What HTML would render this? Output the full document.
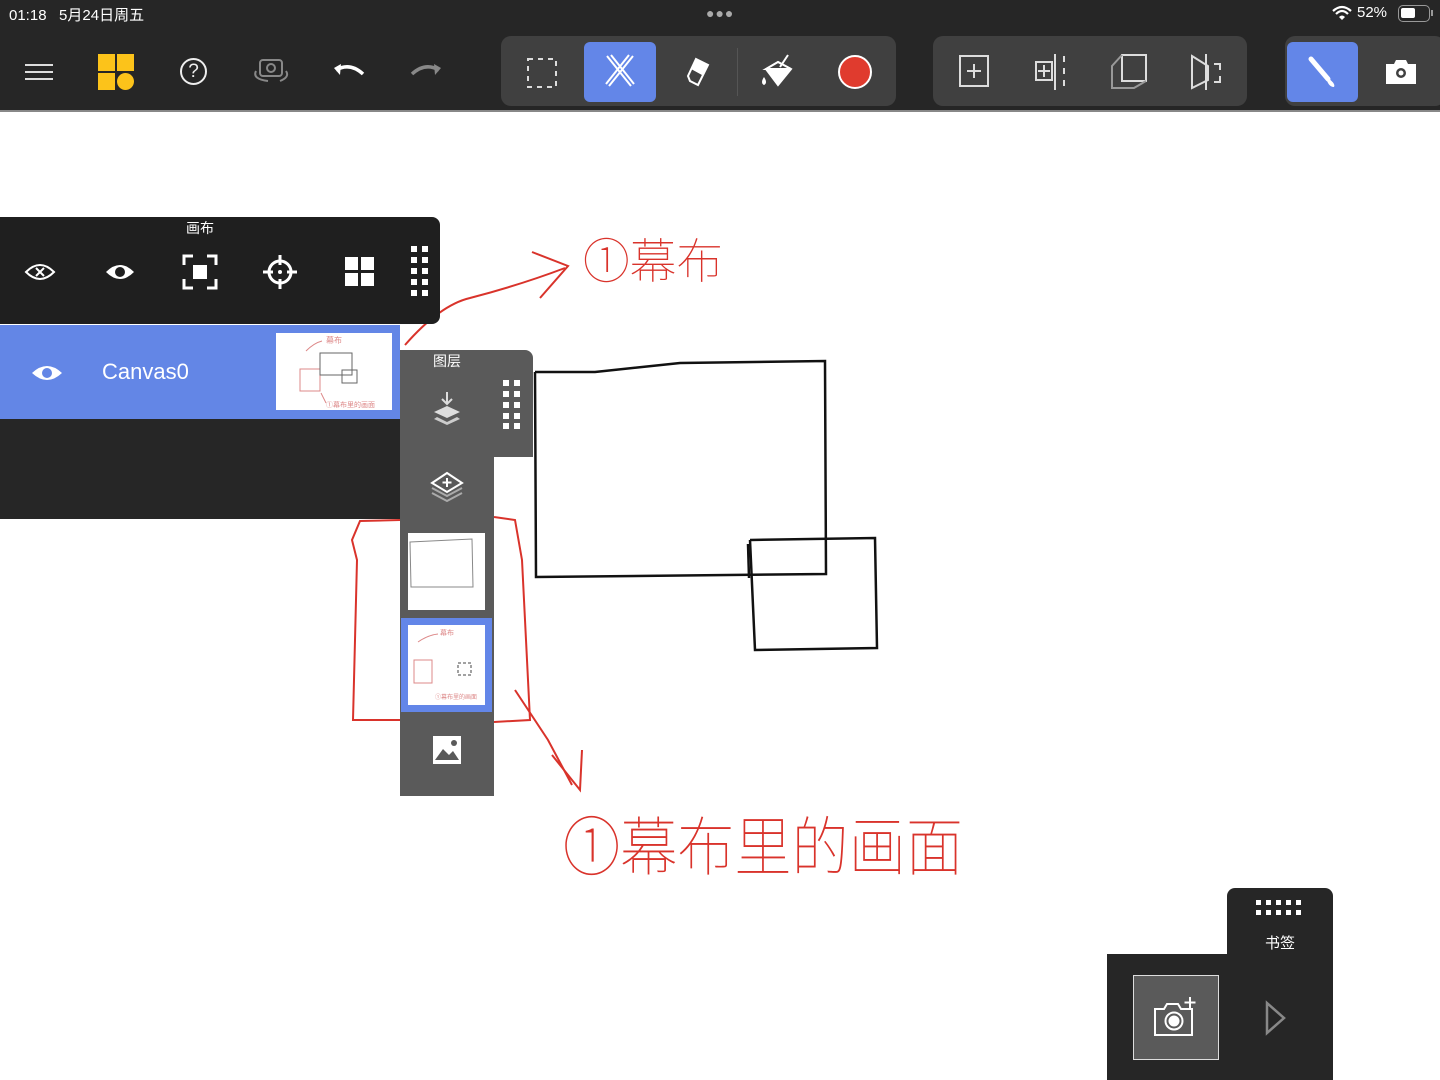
<!DOCTYPE html>
<html><head><meta charset="utf-8"><style>
*{margin:0;padding:0;box-sizing:border-box}
body{width:1440px;height:1080px;background:#fff;position:relative;overflow:hidden;font-family:"Liberation Sans","Noto Sans CJK SC",sans-serif}
.a{position:absolute}
</style></head><body>
<div class="a" style="left:0;top:0;width:1440px;height:110px;background:#262626"></div>
<div class="a" style="left:0;top:110px;width:1440px;height:2px;background:#888"></div>
<div class="a" style="left:9px;top:4px;color:#fff;font-size:15px">01:18&nbsp;&nbsp;&nbsp;5月24日周五</div>
<div class="a" style="left:706px;top:5px;color:#aaa;font-size:14px;letter-spacing:1px">●●●</div>
<svg class="a" style="left:1332px;top:5px" width="20" height="16" viewBox="0 0 20 16"><path d="M1 6 Q10 -2 19 6" stroke="#fff" stroke-width="2.2" fill="none"/><path d="M4 9 Q10 3 16 9" stroke="#fff" stroke-width="2.2" fill="none"/><path d="M7 12 Q10 9 13 12 L10 15Z" fill="#fff"/></svg>
<div class="a" style="left:1357px;top:4px;color:#fff;font-size:15px">52%</div>
<div class="a" style="left:1398px;top:5px;width:32px;height:17px;border:1.5px solid #999;border-radius:5px"><div style="margin:2px;width:14px;height:10px;background:#fff;border-radius:2px"></div></div>
<div class="a" style="left:1431px;top:10px;width:2px;height:6px;background:#999"></div>

<svg class="a" style="left:24px;top:62px" width="30" height="20"><path d="M1 3H29M1 10H29M1 17H29" stroke="#ddd" stroke-width="2"/></svg>
<div class="a" style="left:98px;top:54px;width:17px;height:17px;background:#fcc31a"></div>
<div class="a" style="left:117px;top:54px;width:17px;height:17px;background:#fcc31a"></div>
<div class="a" style="left:98px;top:73px;width:17px;height:17px;background:#fcc31a"></div>
<div class="a" style="left:117px;top:73px;width:17px;height:17px;background:#fcc31a;border-radius:50%"></div>
<div class="a" style="left:180px;top:58px;width:27px;height:27px;border:2px solid #eee;border-radius:50%;color:#eee;font-size:19px;text-align:center;line-height:23px">?</div>
<svg class="a" style="left:250px;top:55px" width="42" height="32"><rect x="10" y="5" width="22" height="16" rx="3" stroke="#888" stroke-width="2" fill="none"/><circle cx="21" cy="13" r="4" stroke="#888" stroke-width="2" fill="none"/><path d="M6 16 Q2 24 18 26 M30 26 Q40 22 36 16" stroke="#888" stroke-width="2" fill="none"/></svg>
<svg class="a" style="left:332px;top:62px" width="34" height="18"><path d="M4 8 Q18 0 31 12" stroke="#fff" stroke-width="3.5" fill="none"/><path d="M2 6 L9 2 L8 13Z" fill="#fff"/></svg>
<svg class="a" style="left:409px;top:62px" width="34" height="18"><path d="M30 8 Q16 0 3 12" stroke="#888" stroke-width="3.5" fill="none"/><path d="M32 6 L25 2 L26 13Z" fill="#888"/></svg>

<div class="a" style="left:501px;top:36px;width:395px;height:70px;background:#404040;border-radius:10px"></div>
<div class="a" style="left:584px;top:42px;width:72px;height:60px;background:#6386e8;border-radius:6px"></div>
<svg class="a" style="left:526px;top:57px" width="32" height="32"><rect x="2" y="2" width="28" height="28" stroke="#ddd" stroke-width="2" stroke-dasharray="5 5" fill="none"/></svg>
<svg class="a" style="left:603px;top:54px" width="34" height="36"><path d="M4 2 L28 32 M8 1 L31 30 M30 2 L6 32 M26 1 L3 30" stroke="#fff" stroke-width="2" fill="none"/></svg>
<svg class="a" style="left:684px;top:56px" width="28" height="32"><path d="M12 3 L24 9 L14 29 L6 25 L4 20Z" stroke="#fff" stroke-width="2" fill="none"/><path d="M12 3 L24 9 L18 19 L7 13Z" fill="#fff"/></svg>
<div class="a" style="left:737px;top:48px;width:1px;height:48px;background:#555"></div>
<svg class="a" style="left:758px;top:53px" width="40" height="38"><path d="M8 16 L20 32 L33 16 L20 9Z" stroke="#fff" stroke-width="2" fill="#fff"/><path d="M8 16 L33 16 L20 9Z" fill="#404040" stroke="#fff" stroke-width="2"/><path d="M22 14 L30 2" stroke="#fff" stroke-width="2"/><path d="M6 24 Q2 30 6 32 Q10 30 6 24Z" fill="#fff"/></svg>
<div class="a" style="left:838px;top:55px;width:34px;height:34px;border-radius:50%;background:#e03b2e;border:2px solid #fff"></div>

<div class="a" style="left:933px;top:36px;width:314px;height:70px;background:#404040;border-radius:10px"></div>
<svg class="a" style="left:956px;top:54px" width="36" height="36"><rect x="4" y="2" width="28" height="30" stroke="#ddd" stroke-width="2" fill="none"/><path d="M18 10V24M11 17H25" stroke="#ddd" stroke-width="2"/></svg>
<svg class="a" style="left:1032px;top:52px" width="40" height="40"><rect x="4" y="10" width="16" height="18" stroke="#ddd" stroke-width="2" fill="none"/><path d="M12 13V25M6 19H18M23 2V38" stroke="#ddd" stroke-width="2"/><path d="M32 4V10M32 16V22M32 28V34" stroke="#ddd" stroke-width="2"/></svg>
<svg class="a" style="left:1108px;top:52px" width="42" height="40"><rect x="14" y="3" width="24" height="26" stroke="#ddd" stroke-width="2" fill="none"/><path d="M14 3 L4 14 L4 36 L26 36 L38 29" stroke="#999" stroke-width="2" fill="none"/></svg>
<svg class="a" style="left:1186px;top:52px" width="40" height="40"><path d="M6 4 L22 14 L22 28 L6 36Z" stroke="#ddd" stroke-width="2" fill="none"/><path d="M20 2V38" stroke="#ddd" stroke-width="2"/><path d="M28 12H34V18M34 24V30H28" stroke="#ddd" stroke-width="2" fill="none"/></svg>

<div class="a" style="left:1285px;top:36px;width:160px;height:70px;background:#404040;border-radius:10px"></div>
<div class="a" style="left:1287px;top:42px;width:71px;height:60px;background:#6386e8;border-radius:6px"></div>
<svg class="a" style="left:1306px;top:55px" width="34" height="34"><path d="M5 4 L22 24" stroke="#fff" stroke-width="5" stroke-linecap="round"/><path d="M20 22 Q30 28 28 32 Q22 32 20 22Z" fill="#fff"/></svg>
<svg class="a" style="left:1384px;top:58px" width="34" height="28"><path d="M2 6 H10 L12 2 H22 L24 6 H32 V26 H2Z" fill="#fff"/><circle cx="17" cy="15" r="5" fill="#404040"/><circle cx="17" cy="15" r="2.5" fill="#fff"/></svg>

<svg class="a" style="left:0;top:0" width="1440" height="1080">
<g fill="none" stroke="#111" stroke-width="2.5">
<path d="M535 372 L536 577 L826 574 L825 361 L680 363 L595 372 L535 372"/>
<path d="M750 540 L755 650 L877 648 L875 538 L750 540"/>
<path d="M748 544 L749 578"/>
</g>
<g fill="none" stroke="#d9332b" stroke-width="2">
<path d="M405 345 Q440 305 470 298 Q520 285 565 268"/>
<path d="M532 252 L568 266 L540 298"/>
<path d="M400 520 L360 521 L352 540 L357 560 L353 720 L400 720"/>
<path d="M494 517 L515 520 L522 560 L530 720 L494 722"/>
<path d="M515 690 L548 740 L572 785"/>
<path d="M552 755 L580 790 L582 750"/>
</g>
<text x="583" y="278" fill="#d9332b" font-size="48" font-family="'Noto Sans CJK SC',sans-serif" font-weight="100" textLength="140" lengthAdjust="spacingAndGlyphs">①幕布</text>
<text x="563" y="870" fill="#d9332b" font-size="64" font-family="'Noto Sans CJK SC',sans-serif" font-weight="100" textLength="400" lengthAdjust="spacingAndGlyphs">①幕布里的画面</text>
</svg>

<div class="a" style="left:0;top:217px;width:440px;height:107px;background:#1f1f1f;border-radius:0 8px 8px 0"></div>
<div class="a" style="left:0;top:218px;width:400px;text-align:center;color:#fff;font-size:14px">画布</div>
<svg class="a" style="left:24px;top:260px" width="32" height="24"><path d="M2 12 Q16 -2 30 12 Q16 26 2 12Z" stroke="#fff" stroke-width="2" fill="none"/><path d="M12 8 L20 16 M20 8 L12 16" stroke="#fff" stroke-width="2"/></svg>
<svg class="a" style="left:104px;top:260px" width="32" height="24"><path d="M2 12 Q16 -2 30 12 Q16 26 2 12Z" fill="#fff"/><circle cx="16" cy="12" r="5" fill="#1f1f1f"/></svg>
<svg class="a" style="left:182px;top:254px" width="36" height="36"><path d="M2 11V2H11M25 2H34V11M34 25V34H25M11 34H2V25" stroke="#fff" stroke-width="3" fill="none"/><rect x="11" y="11" width="14" height="14" fill="#fff"/></svg>
<svg class="a" style="left:262px;top:254px" width="36" height="36"><circle cx="18" cy="18" r="11" stroke="#fff" stroke-width="3" fill="none"/><path d="M18 1V11M18 25V35M1 18H11M25 18H35" stroke="#fff" stroke-width="3"/><circle cx="18" cy="18" r="2" fill="#fff"/></svg>
<svg class="a" style="left:345px;top:257px" width="30" height="30"><rect x="0" y="0" width="13" height="13" fill="#fff"/><rect x="16" y="0" width="13" height="13" fill="#fff"/><rect x="0" y="16" width="13" height="13" fill="#fff"/><rect x="16" y="16" width="13" height="13" fill="#fff"/></svg>
<svg class="a" style="left:411px;top:246px" width="18" height="52"><g fill="#fff"><rect x="0" y="0" width="6" height="6"/><rect x="11" y="0" width="6" height="6"/><rect x="0" y="11" width="6" height="6"/><rect x="11" y="11" width="6" height="6"/><rect x="0" y="22" width="6" height="6"/><rect x="11" y="22" width="6" height="6"/><rect x="0" y="33" width="6" height="6"/><rect x="11" y="33" width="6" height="6"/><rect x="0" y="44" width="6" height="6"/><rect x="11" y="44" width="6" height="6"/></g></svg>
<div class="a" style="left:0;top:325px;width:400px;height:94px;background:#6386e6"></div>
<div class="a" style="left:0;top:419px;width:400px;height:100px;background:#262626"></div>
<svg class="a" style="left:31px;top:362px" width="32" height="22"><path d="M1 11 Q16 -3 31 11 Q16 25 1 11Z" fill="#fff"/><circle cx="16" cy="11" r="5" fill="#6386e6"/></svg>
<div class="a" style="left:102px;top:359px;color:#fff;font-size:22px">Canvas0</div>
<div class="a" style="left:276px;top:333px;width:116px;height:77px;background:#fff"></div>
<svg class="a" style="left:276px;top:333px" width="116" height="77"><g fill="none" stroke="#d88" stroke-width="1"><path d="M30 18 Q38 10 46 8"/><rect x="24" y="36" width="20" height="22"/><path d="M45 60 L50 70"/></g><text x="50" y="10" font-size="8" fill="#d88">幕布</text><text x="50" y="74" font-size="7" fill="#d88">①幕布里的画面</text><g fill="none" stroke="#666"><rect x="44" y="20" width="32" height="22"/><rect x="66" y="37" width="15" height="13"/></g></svg>

<div class="a" style="left:400px;top:350px;width:133px;height:107px;background:#5a5a5a;border-radius:0 8px 0 0"></div>
<div class="a" style="left:400px;top:457px;width:94px;height:339px;background:#5a5a5a"></div>
<div class="a" style="left:400px;top:351px;width:94px;text-align:center;color:#fff;font-size:14px">图层</div>
<svg class="a" style="left:432px;top:390px" width="30" height="38"><path d="M15 2V14M10 9L15 14L20 9" stroke="#ddd" stroke-width="2" fill="none"/><path d="M2 22L15 16L28 22L15 28Z" fill="#ddd"/><path d="M2 29L15 35L28 29L25 27L15 32L5 27Z" fill="#ccc"/></svg>
<svg class="a" style="left:503px;top:380px" width="20" height="50"><g fill="#fff"><rect x="0" y="0" width="6" height="6"/><rect x="11" y="0" width="6" height="6"/><rect x="0" y="11" width="6" height="6"/><rect x="11" y="11" width="6" height="6"/><rect x="0" y="22" width="6" height="6"/><rect x="11" y="22" width="6" height="6"/><rect x="0" y="33" width="6" height="6"/><rect x="11" y="33" width="6" height="6"/><rect x="0" y="43" width="6" height="6"/><rect x="11" y="43" width="6" height="6"/></g></svg>
<svg class="a" style="left:429px;top:470px" width="36" height="32"><path d="M3 18L18 26L33 18M3 23L18 31L33 23" stroke="#aaa" stroke-width="2" fill="none"/><path d="M3 13L18 3L33 13L18 22Z" stroke="#fff" stroke-width="2" fill="#5a5a5a"/><path d="M18 8V17M13.5 12.5H22.5" stroke="#fff" stroke-width="2"/></svg>
<div class="a" style="left:408px;top:533px;width:77px;height:77px;background:#fff"></div>
<svg class="a" style="left:408px;top:533px" width="77" height="77"><path d="M2 9 L64 6 L65 54 L3 54Z" stroke="#888" fill="none"/></svg>
<div class="a" style="left:401px;top:618px;width:91px;height:94px;background:#6386e8"></div>
<div class="a" style="left:408px;top:625px;width:77px;height:80px;background:#fff"></div>
<svg class="a" style="left:408px;top:625px" width="77" height="80"><g fill="none" stroke="#d88"><path d="M10 17 Q20 10 30 9"/><rect x="6" y="35" width="18" height="23"/></g><text x="32" y="10" font-size="7" fill="#d88">幕布</text><text x="27" y="74" font-size="6" fill="#d88">①幕布里的画面</text><rect x="50" y="38" width="13" height="12" stroke="#444" fill="none" stroke-dasharray="3 2"/></svg>
<svg class="a" style="left:432px;top:735px" width="30" height="30"><rect x="1" y="1" width="28" height="28" fill="#fff"/><path d="M3 25 L11 14 L17 20 L21 16 L27 25Z" fill="#5a5a5a"/><circle cx="22" cy="8" r="3" fill="#5a5a5a"/></svg>

<div class="a" style="left:1227px;top:888px;width:106px;height:192px;background:#262626;border-radius:8px 8px 0 0"></div>
<div class="a" style="left:1107px;top:954px;width:226px;height:126px;background:#262626"></div>
<svg class="a" style="left:1256px;top:900px" width="50" height="18"><g fill="#fff"><rect x="0" y="0" width="5" height="5"/><rect x="10" y="0" width="5" height="5"/><rect x="20" y="0" width="5" height="5"/><rect x="30" y="0" width="5" height="5"/><rect x="40" y="0" width="5" height="5"/><rect x="0" y="10" width="5" height="5"/><rect x="10" y="10" width="5" height="5"/><rect x="20" y="10" width="5" height="5"/><rect x="30" y="10" width="5" height="5"/><rect x="40" y="10" width="5" height="5"/></g></svg>
<div class="a" style="left:1227px;top:932px;width:106px;text-align:center;color:#fff;font-size:15px">书签</div>
<div class="a" style="left:1133px;top:975px;width:86px;height:85px;background:#5a5a5a;border:1.5px solid #ddd"></div>
<svg class="a" style="left:1152px;top:995px" width="48" height="44"><path d="M3 14 H12 L15 9 H26 L29 14 H40 V40 H3Z" stroke="#fff" stroke-width="2" fill="none"/><circle cx="22" cy="26" r="8.5" stroke="#fff" stroke-width="2" fill="none"/><circle cx="22" cy="26" r="5.5" fill="#fff"/><path d="M38 2V13M32.5 7.5H43.5" stroke="#fff" stroke-width="2"/></svg>
<svg class="a" style="left:1264px;top:1000px" width="24" height="36"><path d="M3 3 L20 18 L3 33Z" stroke="#888" stroke-width="2.5" fill="none"/></svg>
</body></html>
